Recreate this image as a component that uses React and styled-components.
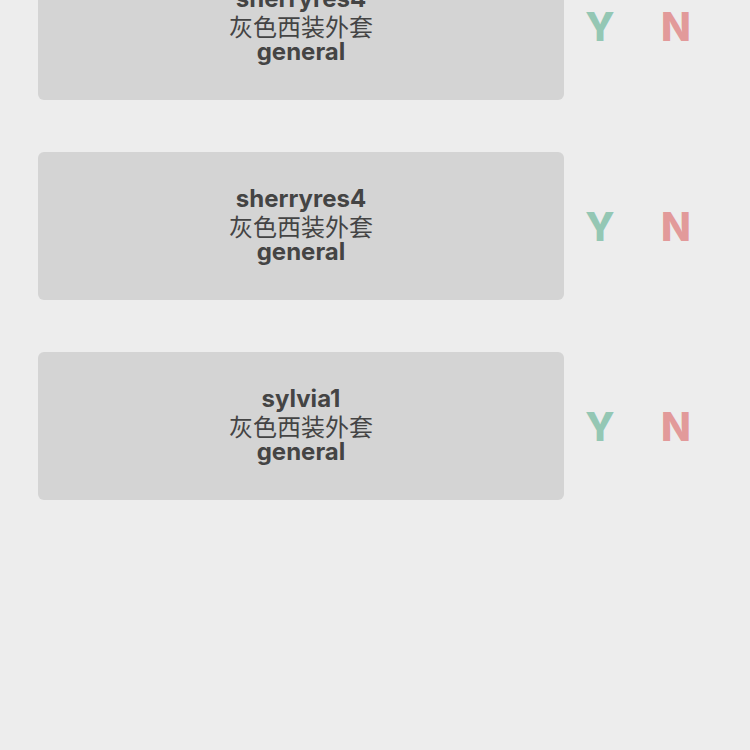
import React from 'react';
import styled, { createGlobalStyle } from 'styled-components';

const GlobalStyle = createGlobalStyle`
  html, body {
    margin: 0;
    padding: 0;
    background: #ededed;
    overflow: hidden;
  }
  body {
    font-family: Inter, "Liberation Sans", "Noto Sans CJK SC", sans-serif;
  }
`;

const Page = styled.div`
  width: 750px;
  height: 750px;
  overflow: hidden;
`;

const List = styled.div`
  display: flex;
  flex-direction: column;
  gap: 52px;
  margin-top: -48px;
  padding-left: 38px;
`;

const Row = styled.div`
  display: flex;
  align-items: center;
`;

const Card = styled.div`
  width: 526px;
  height: 148px;
  background: #d4d4d4;
  border-radius: 6px;
  display: flex;
  flex-direction: column;
  align-items: center;
  justify-content: center;
  color: #444;
  font-size: 24px;
  line-height: 26.5px;
`;

const Name = styled.div`
  font-weight: 700;
`;

const Item = styled.div`
  font-family: "Noto Sans CJK SC", sans-serif;
  font-size: 24px;
`;

const Category = styled.div`
  font-weight: 700;
`;

const Vote = styled.button`
  width: 72px;
  margin-left: ${p => (p.first ? '0' : '4px')};
  border: none;
  background: none;
  padding: 0;
  font-family: Inter, "Liberation Sans", sans-serif;
  font-weight: 800;
  font-size: 39px;
  color: ${p => p.color};
  cursor: pointer;
`;

const items = [
  { user: 'sherryres4', name: '灰色西装外套', cat: 'general' },
  { user: 'sherryres4', name: '灰色西装外套', cat: 'general' },
  { user: 'sylvia1', name: '灰色西装外套', cat: 'general' },
];

export default function App() {
  return (
    <Page>
      <GlobalStyle />
      <List>
        {items.map((it, i) => (
          <Row key={i}>
            <Card>
              <Name>{it.user}</Name>
              <Item>{it.name}</Item>
              <Category>{it.cat}</Category>
            </Card>
            <Vote first color="#94c7b4">Y</Vote>
            <Vote color="#e29a9a">N</Vote>
          </Row>
        ))}
      </List>
    </Page>
  );
}
